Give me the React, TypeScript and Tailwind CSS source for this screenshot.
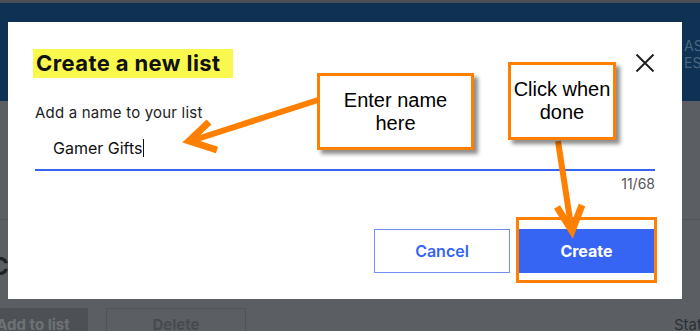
const ORANGE = '#ff8000'

function CloseIcon() {
  return (
    <svg width="20" height="18" viewBox="0 0 20 18" className="block">
      <path d="M1.5 0.5 L18.5 17.5 M18.5 0.5 L1.5 17.5" stroke="#1e1e1e" strokeWidth="2" fill="none" />
    </svg>
  )
}

function Callout({ lines, className }: { lines: string[]; className: string }) {
  return (
    <div
      className={`absolute flex flex-col items-center justify-center bg-white border-[3px] border-[#ff8000] shadow-[4px_4px_4px_rgba(0,0,0,0.45)] font-['Liberation_Sans',Arial,sans-serif] text-[20px] leading-[23px] text-black ${className}`}
    >
      {lines.map((l) => (
        <span key={l}>{l}</span>
      ))}
    </div>
  )
}

function Arrows() {
  return (
    <svg width="700" height="331" className="absolute left-0 top-0 pointer-events-none">
      {/* to the name field */}
      <path d="M318 100 L194 140" stroke={ORANGE} strokeWidth="6" fill="none" />
      <path d="M209 122 L189 141 L217 150" stroke={ORANGE} strokeWidth="7" fill="none" strokeLinejoin="miter" />
      {/* to the create button */}
      <path d="M558 141 L571 226" stroke={ORANGE} strokeWidth="6" fill="none" />
      <path d="M557 207 L572 231 L582 205" stroke={ORANGE} strokeWidth="7" fill="none" strokeLinejoin="miter" />
    </svg>
  )
}

export default function App() {
  return (
    <div className="relative w-[700px] h-[331px] overflow-hidden bg-[#5b5f63] font-['Inter',sans-serif]">
      {/* page behind the overlay */}
      <div className="h-[3px] bg-[#4b4e52]" />
      <div className="h-[98px] bg-[#0f3254] flex justify-end pt-[34px]">
        <div className="w-[16px] overflow-hidden whitespace-nowrap text-[14px] leading-[17px] text-[#4a6580]">
          ASK
          <br />
          ESS
        </div>
      </div>
      <div className="h-[119px] border-b border-[#505458]" />
      <div className="h-[88px] pt-[35px] -ml-[9px] text-[24px] font-bold leading-[24px] text-[#1f2327]">C</div>
      <div className="flex items-start h-[23px]">
        <div className="w-[110px] -ml-[22px] h-[30px] bg-[#4d5155] text-center pt-[8px] text-[15px] font-bold leading-[18px] text-[#6e7276]">
          Add to list
        </div>
        <div className="ml-[18px] w-[140px] h-[30px] border border-[#4f5357] text-center pt-[7px] text-[15px] font-bold leading-[18px] text-[#474b4f]">
          Delete
        </div>
        <div className="ml-auto w-[26px] overflow-hidden whitespace-nowrap pt-[8px] text-[15px] leading-[18px] text-[#2b2f33]">
          Status
        </div>
      </div>

      {/* dialog */}
      <div className="absolute left-[8px] top-[22px] w-[674px] h-[277px] bg-white px-[27px] pt-[27px]">
        <div className="flex justify-between items-start">
          <h2 className="-ml-[2px] w-[200px] h-[29px] bg-[#f9f94d] pl-[3px] text-[22px] tracking-[0.4px] font-bold leading-[29px] text-[#111]">
            Create a new list
          </h2>
          <button className="mt-[5px]">
            <CloseIcon />
          </button>
        </div>
        <div className="mt-[25px] text-[15px] tracking-[0.2px] leading-[20px] text-[#222]">Add a name to your list</div>
        <div className="mt-[6px] h-[42px] border-b-2 border-[#3665f3] flex items-center pl-[18px] pb-[2px]">
          <span className="text-[16px] text-[#111]">Gamer Gifts</span>
          <span className="w-px h-[18px] bg-[#111]" />
        </div>
        <div className="mt-[5px] text-right text-[14px] leading-[16px] text-[#555]">11/68</div>
        <div className="mt-[37px] flex justify-end gap-[9px] pr-[1px]">
          <button className="w-[136px] h-[44px] border border-[#6f8ff2] bg-white text-[16px] font-semibold text-[#3665f3]">
            Cancel
          </button>
          <button className="w-[135px] h-[44px] bg-[#3665f3] text-[16px] font-bold text-white">Create</button>
        </div>
      </div>

      {/* annotations */}
      <div className="absolute left-[516px] top-[217px] w-[141px] h-[66px] border-[3px] border-[#ff8000]" />
      <Arrows />
      <Callout lines={['Enter name', 'here']} className="left-[317px] top-[73px] w-[157px] h-[77px]" />
      <Callout lines={['Click when', 'done']} className="left-[508px] top-[62px] w-[108px] h-[78px]" />
    </div>
  )
}
